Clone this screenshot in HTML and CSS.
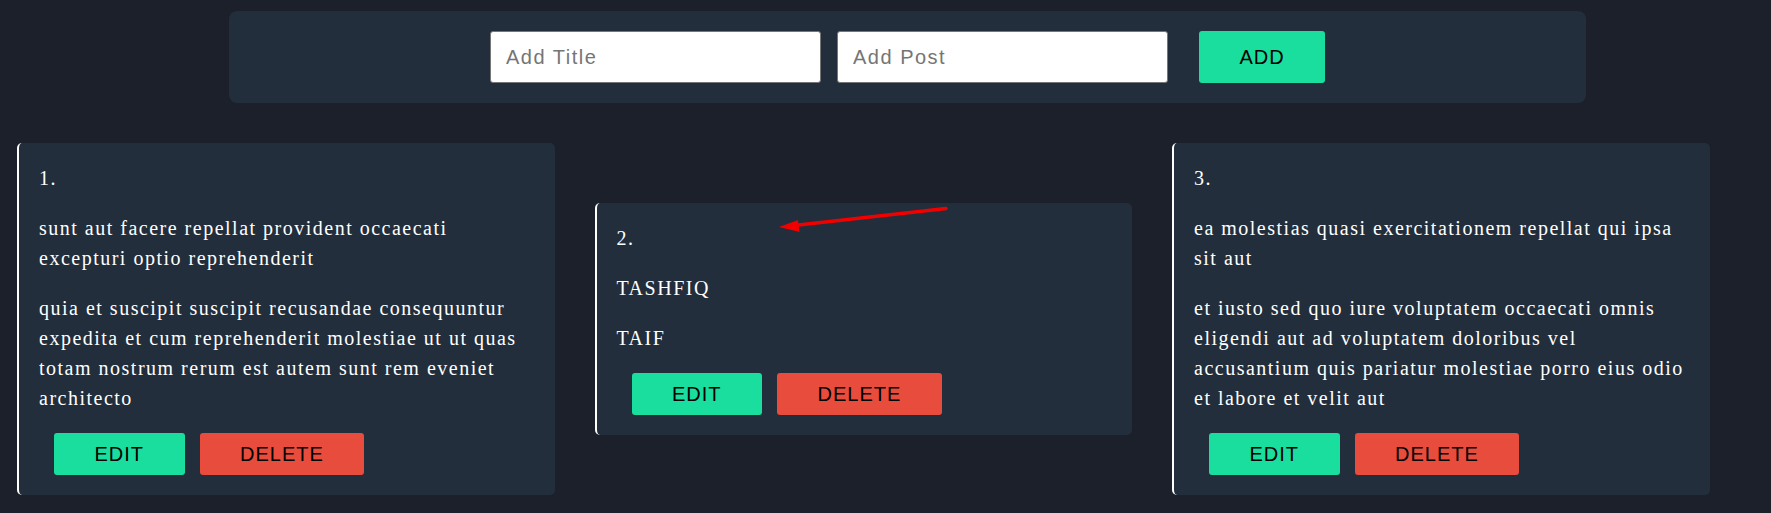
FILE: index.html
```html
<!DOCTYPE html>
<html lang="en">
<head>
<meta charset="utf-8">
<title>Posts</title>
<link rel="stylesheet" href="styles.css">
</head>
<body>
<div class="page">
  <form class="composer">
    <input class="field" type="text" placeholder="Add Title">
    <input class="field" type="text" placeholder="Add Post">
    <button class="btn btn-add" type="button">ADD</button>
  </form>

  <div class="posts">
    <div class="card">
      <p class="line">1.</p>
      <p class="line">sunt aut facere repellat provident occaecati excepturi optio reprehenderit</p>
      <p class="line">quia et suscipit suscipit recusandae consequuntur expedita et cum reprehenderit molestiae ut ut quas totam nostrum rerum est autem sunt rem eveniet architecto</p>
      <div class="actions">
        <button class="btn btn-edit" type="button">EDIT</button>
        <button class="btn btn-delete" type="button">DELETE</button>
      </div>
    </div>

    <div class="card card-marked">
      <p class="line">2.</p>
      <p class="line">TASHFIQ</p>
      <p class="line">TAIF</p>
      <div class="actions">
        <button class="btn btn-edit" type="button">EDIT</button>
        <button class="btn btn-delete" type="button">DELETE</button>
      </div>
      <svg class="annotation" width="180" height="30" viewBox="0 0 180 30" aria-hidden="true">
        <line x1="168" y1="3.5" x2="16" y2="20.5" stroke="#f20000" stroke-width="3.4" stroke-linecap="round"/>
        <polygon points="1,22 20,15 21.5,27" fill="#f20000"/>
      </svg>
    </div>

    <div class="card">
      <p class="line">3.</p>
      <p class="line">ea molestias quasi exercitationem repellat qui ipsa sit aut</p>
      <p class="line">et iusto sed quo iure voluptatem occaecati omnis eligendi aut ad voluptatem doloribus vel accusantium quis pariatur molestiae porro eius odio et labore et velit aut</p>
      <div class="actions">
        <button class="btn btn-edit" type="button">EDIT</button>
        <button class="btn btn-delete" type="button">DELETE</button>
      </div>
    </div>
  </div>
</div>
</body>
</html>
```

FILE: styles.css
```css
* {
  box-sizing: border-box;
}

html,
body {
  background: #1b202b;
}

body {
  margin: 8px;
  font-family: "Liberation Serif", "Times New Roman", serif;
  color: #ffffff;
}

.page {
  display: flex;
  flex-direction: column;
  padding-top: 3px;
}

.composer {
  margin: 0 0 0 221px;
  width: 1357px;
  height: 92px;
  padding: 20px;
  background: #222e3c;
  border-radius: 8px;
  display: flex;
  justify-content: center;
  align-items: center;
  gap: 16px;
}

.field {
  width: 331px;
  height: 52px;
  margin: 0;
  padding: 0 15px;
  border: 1px solid #767676;
  border-radius: 3px;
  background: #ffffff;
  font-family: "Liberation Sans", Arial, sans-serif;
  font-size: 20px;
  letter-spacing: 1.5px;
  color: #222;
}

.field::placeholder {
  color: #757575;
}

.btn {
  margin: 0;
  border: none;
  border-radius: 3px;
  font-family: "Liberation Sans", Arial, sans-serif;
  font-size: 20px;
  letter-spacing: 1px;
  color: #000000;
  line-height: 22px;
  cursor: pointer;
}

.btn-add {
  margin-left: 15px;
  height: 52px;
  width: 126px;
  padding: 0;
  background: #19de9d;
}

.posts {
  margin-top: 40px;
  padding-left: 9px;
  display: flex;
  align-items: center;
  gap: 40px;
}

.card {
  position: relative;
  flex: 0 0 537.5px;
  padding: 0 20px;
  background: #222e3c;
  border-left: 2px solid #ffffff;
  border-radius: 5px;
  overflow: visible;
}

.line {
  margin: 20px 0;
  font-size: 20px;
  line-height: 30px;
  letter-spacing: 1.5px;
}

.actions {
  display: flex;
  gap: 15px;
  padding: 0 0 20px 15px;
}

.btn-edit,
.btn-delete {
  height: 42px;
  padding: 10px 40.5px;
}

.btn-edit {
  background: #19de9d;
}

.btn-delete {
  background: #e74c3c;
}

.annotation {
  position: absolute;
  left: 181px;
  top: 2px;
  overflow: visible;
}
```
